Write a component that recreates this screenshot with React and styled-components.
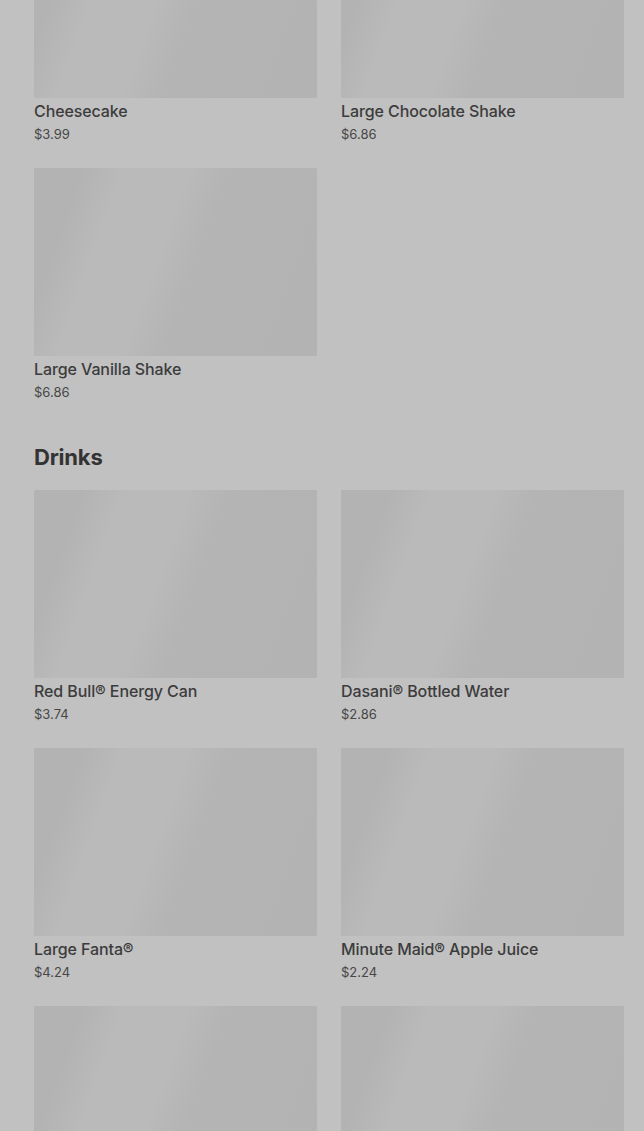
import React from "react";
import styled, { createGlobalStyle } from "styled-components";

const Global = createGlobalStyle`
  html, body { margin: 0; padding: 0; background: #c1c1c1; }
  body { font-family: Inter, "Noto Sans", Arial, sans-serif; overflow: hidden; }
`;

const Page = styled.main`
  padding: 0 20px 0 34px;
  margin-top: -90px;
`;

const Section = styled.section`
  & + & { margin-top: 42px; }
`;

const Heading = styled.h2`
  margin: 0 0 19px;
  font-size: 22px;
  line-height: 28px;
  font-weight: 700;
  color: #333333;
  letter-spacing: -0.2px;
`;

const Grid = styled.div`
  display: grid;
  grid-template-columns: repeat(2, 283px);
  column-gap: 24px;
  row-gap: 25px;
`;

const Card = styled.div`
  display: flex;
  flex-direction: column;
`;

const Thumb = styled.div`
  height: 188px;
  border-radius: 1px;
  background: linear-gradient(
    110deg,
    #b3b3b3 14%,
    #bababa 26%,
    #bababa 44%,
    #b4b4b4 56%,
    #b3b3b3 100%
  );
`;

const Name = styled.div`
  margin-top: 3px;
  font-size: 16px;
  line-height: 20px;
  font-weight: 500;
  color: #3c3c3c;
  letter-spacing: -0.1px;
`;

const Price = styled.div`
  margin-top: 4px;
  font-size: 13px;
  line-height: 18px;
  font-weight: 400;
  color: #474747;
`;

const sections = [
  {
    title: null,
    items: [
      ["Cheesecake", "$3.99"],
      ["Large Chocolate Shake", "$6.86"],
      ["Large Vanilla Shake", "$6.86"],
    ],
  },
  {
    title: "Drinks",
    items: [
      ["Red Bull® Energy Can", "$3.74"],
      ["Dasani® Bottled Water", "$2.86"],
      ["Large Fanta®", "$4.24"],
      ["Minute Maid® Apple Juice", "$2.24"],
      ["Large Coca-Cola®", "$4.24"],
      ["Large Sprite®", "$4.24"],
    ],
  },
];

export default function App() {
  return (
    <>
      <Global />
      <Page>
        {sections.map((s, i) => (
          <Section key={i}>
            {s.title && <Heading>{s.title}</Heading>}
            <Grid>
              {s.items.map(([n, p]) => (
                <Card key={n}>
                  <Thumb />
                  <Name>{n}</Name>
                  <Price>{p}</Price>
                </Card>
              ))}
            </Grid>
          </Section>
        ))}
      </Page>
    </>
  );
}
